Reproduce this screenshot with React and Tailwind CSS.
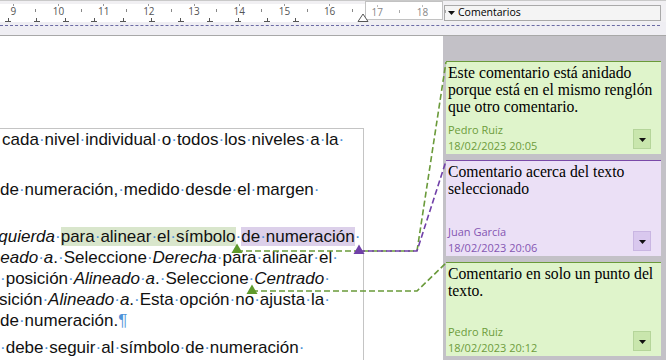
import React from "react";
import clsx from "clsx";

const numbers = [9, 10, 11, 12, 13, 14, 15, 16];
const tabs = [0, 1, 2, 3, 4, 5, 6, 7, 8, 9, 10];

// blue formatting dots instead of spaces
function dotted(t, key) {
  return t.split("·").map((w, k) => (
    <React.Fragment key={key + "-" + k}>
      {k > 0 && <span className="text-[#4f93d9]">·</span>}
      {w}
    </React.Fragment>
  ));
}

function Line({ parts, className }) {
  return (
    <div className={clsx("whitespace-nowrap leading-[21px]", className)}>
      {parts.map((p, i) => {
        if (typeof p === "string") {
          return <React.Fragment key={i}>{dotted(p, i)}</React.Fragment>;
        }
        return (
          <span
            key={i}
            className={clsx(
              p.i && "italic",
              p.hl === "green" && "bg-[#d9e6cc]",
              p.hl === "purple" && "bg-[#dcd0ea]"
            )}
          >
            {dotted(p.t, i)}
            {p.pil && <span className="text-[#4f93d9]">¶</span>}
          </span>
        );
      })}
    </div>
  );
}

function Comment({ text, author, date, box, meta, btn }) {
  return (
    <div className={clsx("flex flex-col border-t pl-[2px] pr-[4px] pt-[2px]", box)}>
      <p className="font-['Liberation_Serif',serif] text-[15.7px] leading-[17px] text-black">
        {text}
      </p>
      <div className="flex-1" />
      <div className="flex items-end justify-between">
        <div className={clsx("font-['Open_Sans',sans-serif] text-[11px] leading-[16px]", meta)}>
          <div>{author}</div>
          <div>{date}</div>
        </div>
        <div
          className={clsx(
            "mb-[5px] mr-[6px] flex h-[20px] w-[18px] items-end justify-center border pb-[6px]",
            btn
          )}
        >
          <svg width="7" height="4" viewBox="0 0 7 4">
            <path d="M0 0h7L3.5 4z" fill="#111" />
          </svg>
        </div>
      </div>
    </div>
  );
}

export default function App() {
  return (
    <div className="relative h-[360px] w-[666px] overflow-hidden bg-white font-['Liberation_Sans',sans-serif]">
      {/* ruler */}
      <div className="flex h-[22px] border-t border-[#c9c9c9] bg-[#f1f0f3]">
        <div className="relative mt-[3px] flex h-[18px] w-[443px]">
          <div className="flex w-[365px] flex-col overflow-hidden bg-white">
            <div className="ml-[2px] flex h-[13px]">
              {numbers.map((n) => (
                <React.Fragment key={n}>
                  <div className="flex w-[22.6px] shrink-0 flex-col items-center">
                    <div className="h-[2px] w-px bg-[#999]" />
                    <span className="font-['Open_Sans',sans-serif] text-[10px] leading-[11px] text-[#555]">
                      {n}
                    </span>
                  </div>
                  <div className="flex w-[22.6px] shrink-0 items-center justify-center">
                    <div className="h-[3px] w-px bg-[#888]" />
                  </div>
                </React.Fragment>
              ))}
            </div>
            <div className="-ml-[6.4px] flex h-[5px]">
              {tabs.map((k) => (
                <div key={k} className="flex w-[28.8px] shrink-0 flex-col items-center justify-end">
                  <div className="h-[3px] w-px bg-[#555]" />
                  <div className="h-px w-[6px] bg-[#555]" />
                </div>
              ))}
            </div>
          </div>
          <div className="-mt-[3px] flex h-[19px] w-[78px] border border-[#c2c2c2] bg-white pt-[3px]">
            <div className="flex h-[13px]">
              {[17, 18].map((n) => (
                <React.Fragment key={n}>
                  <div className="flex w-[22.6px] shrink-0 flex-col items-center">
                    <div className="h-[2px] w-px bg-[#bbb]" />
                    <span className="font-['Open_Sans',sans-serif] text-[10px] leading-[11px] text-[#888]">
                      {n}
                    </span>
                  </div>
                  <div className="flex w-[22.6px] shrink-0 items-center justify-center">
                    <div className="h-[3px] w-px bg-[#aaa]" />
                  </div>
                </React.Fragment>
              ))}
            </div>
          </div>
          <svg className="absolute left-[357px] top-[9px]" width="12" height="9" viewBox="0 0 12 9">
            <path d="M1 8.5L6 1l5 7.5z" fill="#fff" stroke="#555" strokeWidth="1" />
          </svg>
        </div>
        <div className="ml-px mt-[4px] flex h-[16px] w-[217px] items-center gap-[3px] border border-[#a9a9a9] bg-[#f4f4f4] pl-[3px] font-['Open_Sans',sans-serif] text-[10.5px] text-black">
          <svg width="7" height="4" viewBox="0 0 7 4">
            <path d="M0 0h7L3.5 4z" fill="#111" />
          </svg>
          <span>Comentarios</span>
        </div>
      </div>
      <div className="h-[14px] border-b border-[#a8a8a8] bg-[#efeef3] pt-[3px]">
        <div className="w-[660px] border-t border-dashed border-[#6b6ba5]" />
      </div>

      {/* body */}
      <div className="flex h-[324px]">
        <div className="flex w-[443px] flex-col">
          <div className="mt-[92px] flex w-[364px] flex-1 flex-col overflow-hidden border-r border-t border-[#c4c4c4] text-[17px] text-[#111]">
            <Line className="ml-[2px]" parts={["cada·nivel·individual·o·todos·los·niveles·a·la·"]} />
            <Line className="mt-[29px]" parts={["de·numeración,·medido·desde·el·margen·"]} />
            <Line
              className="-ml-[14px] mt-[26px]"
              parts={[
                { t: "izquierda", i: true },
                "·",
                { t: "para·alinear·el·símbolo", hl: "green" },
                "·",
                { t: "de·numeración", hl: "purple" },
                "·",
              ]}
            />
            <Line
              className="-ml-[28px]"
              parts={[
                { t: "Alineado·a", i: true },
                ".·Seleccione·",
                { t: "Derecha", i: true },
                "·para·alinear·el·",
              ]}
            />
            <Line
              parts={[
                "·posición·",
                { t: "Alineado·a", i: true },
                ".·Seleccione·",
                { t: "Centrado", i: true },
                "·",
              ]}
            />
            <Line
              className="-ml-[20px]"
              parts={["posición·", { t: "Alineado·a", i: true }, ".·Esta·opción·no·ajusta·la·"]}
            />
            <Line parts={[{ t: "de·numeración.", pil: true }]} />
            <Line className="mt-[6px]" parts={["·debe·seguir·al·símbolo·de·numeración·"]} />
          </div>
        </div>

        <div className="flex w-[223px] flex-col gap-[6px] bg-[#c3c1c7] pl-[3px] pr-[5px] pt-[25px]">
          <Comment
            box="h-[93px] border-[#6a9a3a] bg-[#dff4cb]"
            meta="text-[#6d9c3c]"
            btn="border-[#b5d59a] bg-[#c9e6ad]"
            text="Este comentario está anidado porque está en el mismo renglón que otro comentario."
            author="Pedro Ruiz"
            date="18/02/2023 20:05"
          />
          <Comment
            box="h-[96px] border-[#7a4aa8] bg-[#ebe0f6]"
            meta="text-[#8456b2]"
            btn="border-[#c9b6e2] bg-[#d9c8ee]"
            text="Comentario acerca del texto seleccionado"
            author="Juan García"
            date="18/02/2023 20:06"
          />
          <Comment
            box="h-[94px] border-[#6a9a3a] bg-[#dff4cb]"
            meta="text-[#6d9c3c]"
            btn="border-[#b5d59a] bg-[#c9e6ad]"
            text="Comentario en solo un punto del texto."
            author="Pedro Ruiz"
            date="18/02/2023 20:12"
          />
        </div>
      </div>

      {/* comment anchors and connectors */}
      <svg
        className="pointer-events-none absolute left-0 top-0"
        width="666"
        height="360"
        viewBox="0 0 666 360"
      >
        <g fill="none" strokeWidth="1.6" strokeDasharray="6 3">
          <path d="M237 251H417L446 62" stroke="#6a9a3a" />
          <path d="M359 251H417L446 161" stroke="#7040a8" />
          <path d="M252 291H417L446 263" stroke="#6a9a3a" />
        </g>
        <path d="M231.5 253L237 243.5L242.5 253z" fill="#5f9a2c" />
        <path d="M353.5 254L359 244.5L364.5 254z" fill="#7040a8" />
        <path d="M246.5 294L252 284.5L257.5 294z" fill="#5f9a2c" />
      </svg>
    </div>
  );
}
